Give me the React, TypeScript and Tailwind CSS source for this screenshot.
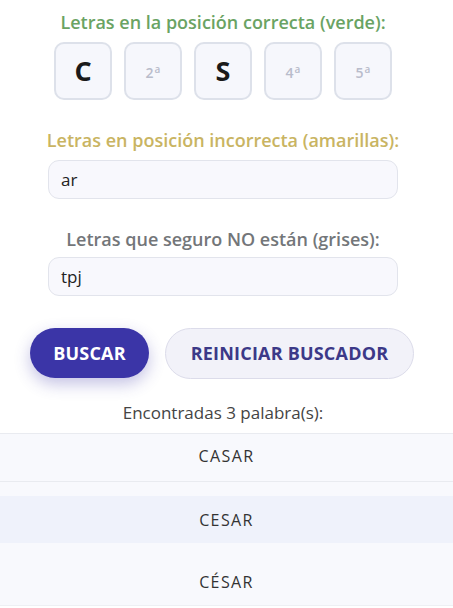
import React from "react";

const slots = [
  { value: "C" },
  { value: "" },
  { value: "S" },
  { value: "" },
  { value: "" },
];

const words = ["CASAR", "CESAR", "CÉSAR"];

export default function App() {
  return (
    <div
      className="w-[453px] h-[608px] overflow-hidden bg-white"
      style={{ fontFamily: '"Open Sans", "Noto Sans", sans-serif' }}
    >
      <div className="w-[446px] flex flex-col items-center pt-[9px]">
        <h2 className="text-[18px] leading-[26px] font-semibold text-[#6aa363]">
          Letras en la posición correcta (verde):
        </h2>
        <div className="flex gap-[12px] mt-[7px]">
          {slots.map((s, i) => (
            <div
              key={i}
              className="w-[58px] h-[58px] rounded-[10px] border-2 border-[#dde1ea] bg-[#f6f7fc] flex items-center justify-center"
            >
              {s.value ? (
                <span className="text-[27px] font-bold text-[#1a1a1a]">{s.value}</span>
              ) : (
                <span className="text-[14px] font-semibold text-[#b9bccb] mt-[3px]">
                  {i + 1}
                  <sup className="text-[10px] ml-[1px]">a</sup>
                </span>
              )}
            </div>
          ))}
        </div>

        <h2 className="mt-[27px] text-[18px] leading-[26px] font-semibold text-[#c9b462]">
          Letras en posición incorrecta (amarillas):
        </h2>
        <div className="mt-[7px] w-[350px] h-[39px] rounded-[11px] border border-[#e2e4ec] bg-[#f8f8fd] flex items-center px-[12px] text-[17px] text-[#222]">
          ar
        </div>

        <h2 className="mt-[27px] text-[18px] leading-[26px] font-semibold text-[#737679]">
          Letras que seguro NO están (grises):
        </h2>
        <div className="mt-[5px] w-[350px] h-[39px] rounded-[11px] border border-[#e2e4ec] bg-[#f8f8fd] flex items-center px-[12px] text-[17px] text-[#222]">
          tpj
        </div>

        <div className="mt-[32px] flex gap-[16px] self-start ml-[30px]">
          <button className="h-[50px] w-[119px] rounded-full bg-[#3b35a7] text-white text-[18px] font-bold tracking-[0.2px] shadow-[0_6px_16px_rgba(59,53,167,0.3)]">
            BUSCAR
          </button>
          <button className="h-[51px] w-[249px] rounded-full bg-[#f2f2f9] border border-[#dcdcea] text-[#3c3988] text-[18px] font-bold tracking-[0.2px]">
            REINICIAR BUSCADOR
          </button>
        </div>

        <p className="mt-[22px] text-[17px] leading-[24px] text-[#444]">Encontradas 3 palabra(s):</p>
      </div>

      <ul className="mt-[8px] border-t border-[#e9ebf0] bg-[#f8f9fd]">
        {words.map((w, i) => (
          <li
            key={w}
            className={
              i === 0
                ? "h-[48px] pb-[3px] flex items-center justify-center border-b border-[#e9ebf0]"
                : i === 1
                ? "mt-[14px] h-[47px] flex items-center justify-center bg-[#eff2fb]"
                : "mt-[16px] h-[47px] flex items-center justify-center border-b border-[#eef0f4]"
            }
          >
            <span className="text-[16px] tracking-[1.4px] text-[#333]">{w}</span>
          </li>
        ))}
      </ul>
    </div>
  );
}
